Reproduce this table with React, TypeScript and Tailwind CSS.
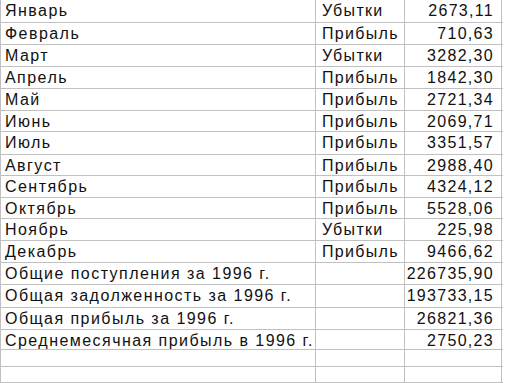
const rows: { label: string; kind: string; sum: string; h: string }[] = [
  { label: "Январь", kind: "Убытки", sum: "2673,11", h: "h-[23px]" },
  { label: "Февраль", kind: "Прибыль", sum: "710,63", h: "h-[22px]" },
  { label: "Март", kind: "Убытки", sum: "3282,30", h: "h-[22px]" },
  { label: "Апрель", kind: "Прибыль", sum: "1842,30", h: "h-[22px]" },
  { label: "Май", kind: "Прибыль", sum: "2721,34", h: "h-[22px]" },
  { label: "Июнь", kind: "Прибыль", sum: "2069,71", h: "h-[21px]" },
  { label: "Июль", kind: "Прибыль", sum: "3351,57", h: "h-[23px]" },
  { label: "Август", kind: "Прибыль", sum: "2988,40", h: "h-[21px]" },
  { label: "Сентябрь", kind: "Прибыль", sum: "4324,12", h: "h-[22px]" },
  { label: "Октябрь", kind: "Прибыль", sum: "5528,06", h: "h-[21px]" },
  { label: "Ноябрь", kind: "Убытки", sum: "225,98", h: "h-[22px]" },
  { label: "Декабрь", kind: "Прибыль", sum: "9466,62", h: "h-[22px]" },
  { label: "Общие поступления за 1996 г.", kind: "", sum: "226735,90", h: "h-[22px]" },
  { label: "Общая задолженность за 1996 г.", kind: "", sum: "193733,15", h: "h-[23px]" },
  { label: "Общая прибыль за 1996 г.", kind: "", sum: "26821,36", h: "h-[22px]" },
  { label: "Среднемесячная прибыль в 1996 г.", kind: "", sum: "2750,23", h: "h-[20px]" },
  { label: "", kind: "", sum: "", h: "h-[17px]" },
  { label: "", kind: "", sum: "", h: "h-[16px]" },
];

export default function App() {
  return (
    <div className="w-[505px] h-[383px] overflow-hidden bg-white font-['Liberation_Sans',Arial,sans-serif] text-[16px] tracking-[1.3px] text-[#111]">
      <div className="w-[503px] border-l border-[#c0c0c0]">
        {rows.map((r, i) => (
          <div key={i} className={`flex border-b border-[#c0c0c0] ${r.h}`}>
            <div className="w-[315px] shrink-0 border-r border-[#c0c0c0] pl-[4px] leading-[22px] tracking-[1.45px] whitespace-nowrap overflow-hidden">
              {r.label}
            </div>
            <div className="w-[89px] shrink-0 border-r border-[#c0c0c0] pl-[6px] leading-[22px] whitespace-nowrap overflow-hidden">
              {r.kind}
            </div>
            <div className="w-[97px] shrink-0 border-r border-[#c0c0c0] pr-[7px] text-right leading-[22px] whitespace-nowrap overflow-hidden">
              {r.sum}
            </div>
          </div>
        ))}
      </div>
    </div>
  );
}
